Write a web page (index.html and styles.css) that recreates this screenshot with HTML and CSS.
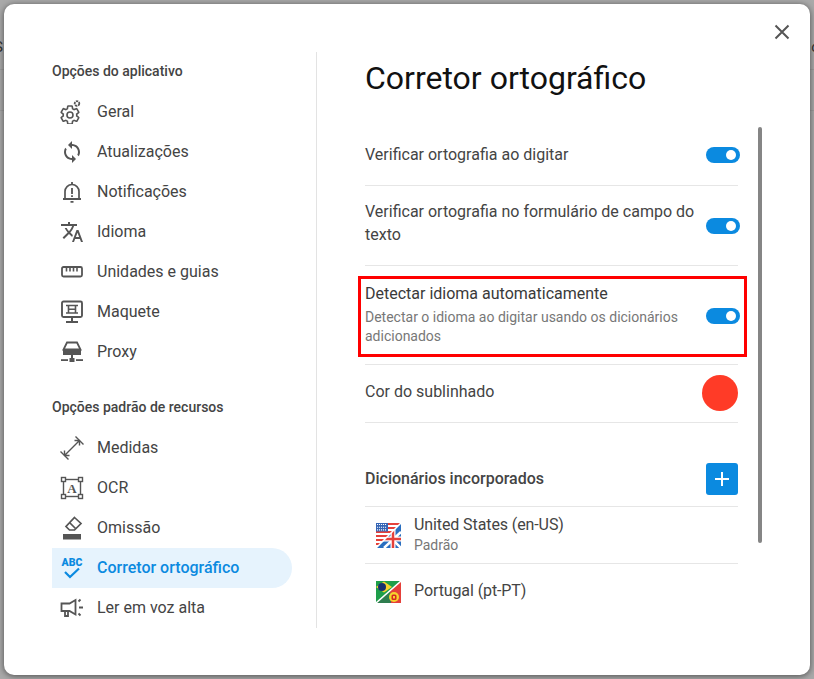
FILE: index.html
```html
<!DOCTYPE html>
<html lang="pt">
<head>
  <meta charset="UTF-8">
  <title>Corretor ortográfico</title>
  <link rel="stylesheet" href="styles.css">
</head>
<body>
  <span class="peek peek-left">S</span>
  <span class="peek peek-right">c</span>

  <div class="dialog">
    <button class="close" aria-label="Fechar">
      <svg width="16" height="16" viewBox="0 0 16 16"><path d="M1.5 1.500l13 13M14.500 1.500l-13 13" stroke="#555" stroke-width="2" fill="none"/></svg>
    </button>

    <nav class="side">
      <h3 class="side-head">Opções do aplicativo</h3>
      <a class="item">
        <svg class="icon" viewBox="0 0 24 24" fill="none" stroke="#555" stroke-width="1.700">
          <g transform="translate(-1.300 3.700) scale(.94)"><path d="M19.14,12.94c0.04-0.3,0.06-0.61,0.06-0.94c0-0.32-0.02-0.64-0.07-0.94l2.03-1.58c0.18-0.14,0.23-0.41,0.12-0.61l-1.92-3.32c-0.12-0.22-0.37-0.29-0.59-0.22l-2.39,0.96c-0.5-0.38-1.03-0.7-1.62-0.94L14.4,2.81c-0.04-0.24-0.24-0.41-0.48-0.41h-3.84c-0.24,0-0.43,0.17-0.47,0.41L9.25,5.35C8.66,5.59,8.12,5.92,7.63,6.29L5.24,5.33c-0.22-0.08-0.47,0-0.59,0.22L2.74,8.87C2.62,9.08,2.66,9.34,2.86,9.48l2.03,1.58C4.84,11.36,4.8,11.69,4.8,12s0.02,0.64,0.07,0.94l-2.03,1.58c-0.18,0.14-0.23,0.41-0.12,0.61l1.92,3.32c0.12,0.22,0.37,0.29,0.59,0.22l2.39-0.96c0.5,0.38,1.03,0.7,1.62,0.94l0.36,2.54c0.05,0.24,0.24,0.41,0.48,0.41h3.84c0.24,0,0.44-0.17,0.47-0.41l0.36-2.54c0.59-0.24,1.13-0.56,1.62-0.94l2.39,0.96c0.22,0.08,0.47,0,0.59-0.22l1.92-3.32c0.12-0.22,0.07-0.47-0.12-0.61L19.14,12.94z"/><circle cx="12" cy="12" r="3.200"/></g>
          <circle cx="17" cy="3.500" r="2.300" stroke-width="1.800" stroke-dasharray="2.200 .7"/>
        </svg>
        Geral
      </a>
      <a class="item">
        <svg class="icon" viewBox="0 0 24 24" fill="#555"><path d="M12 4V1L8 5l4 4V6c3.310 0 6 2.690 6 6 0 1.010-.25 1.970-.7 2.800l1.460 1.460C19.540 15.030 20 13.570 20 12c0-4.420-3.580-8-8-8zm0 14c-3.310 0-6-2.690-6-6 0-1.010.25-1.970.7-2.800L5.240 7.740C4.460 8.970 4 10.430 4 12c0 4.420 3.580 8 8 8v3l4-4-4-4v3z"/></svg>
        Atualizações
      </a>
      <a class="item">
        <svg class="icon" viewBox="0 0 24 24" fill="none" stroke="#555" stroke-width="1.700">
          <path d="M5 18.500v-7a7 7 0 0 1 14 0v7"/>
          <path d="M3 19h18" stroke-width="2"/>
          <path d="M12 2v2.500M12 8v6M12 15.200v1.800M10.500 21.800h3" stroke-width="1.800"/>
        </svg>
        Notificações
      </a>
      <a class="item">
        <svg class="icon" viewBox="0 0 24 24" fill="#555"><path d="M12.870 15.070l-2.540-2.510.03-.03c1.740-1.940 2.980-4.170 3.710-6.530H17V4h-7V2H8v2H1v1.990h11.170C11.500 7.920 10.440 9.750 9 11.350 8.070 10.320 7.300 9.190 6.690 8h-2c.73 1.630 1.730 3.170 2.980 4.560l-5.090 5.020L4 19l5-5 3.110 3.110.76-2.040zM18.500 10h-2L12 22h2l1.120-3h4.750L21 22h2l-4.500-12zm-2.620 7l1.620-4.330L19.120 17h-3.240z"/></svg>
        Idioma
      </a>
      <a class="item">
        <svg class="icon" viewBox="0 0 24 24" fill="none" stroke="#555" stroke-width="1.800">
          <rect x="2" y="7" width="20" height="9.500" rx="1.500"/>
          <path d="M6.500 7.500v4M10 7.500v4M13.500 7.500v4M17 7.500v4" stroke-width="1.600"/>
        </svg>
        Unidades e guias
      </a>
      <a class="item">
        <svg class="icon" viewBox="0 0 24 24" fill="none" stroke="#555" stroke-width="1.900">
          <rect x="2" y="1.500" width="20" height="15.500" rx="1.500"/>
          <path d="M6 5.500h12M6 13h12M8.500 5.500v7.500M15.500 5.500v7.500M8.500 9.300h7" stroke-width="1.600"/>
          <path d="M12 17v4.500M6 22h12" stroke-width="2"/>
        </svg>
        Maquete
      </a>
      <a class="item">
        <svg class="icon" viewBox="0 0 24 24" fill="#555">
          <path d="M7 2.500h10l3.500 7h-17z" fill="none" stroke="#555" stroke-width="1.800"/>
          <rect x="3" y="9" width="18" height="6"/>
          <rect x="11" y="15" width="2" height="3"/>
          <rect x="9.500" y="18" width="5" height="4"/>
          <rect x="1" y="19.200" width="7" height="1.800"/>
          <rect x="16" y="19.200" width="7" height="1.800"/>
        </svg>
        Proxy
      </a>

      <h3 class="side-head side-head-next">Opções padrão de recursos</h3>
      <a class="item">
        <svg class="icon" viewBox="0 0 24 24" fill="none" stroke="#555" stroke-width="1.400">
          <path d="M4.500 19.500L19.500 4.500M19.500 4.500h-5M19.500 4.500v5M4.500 19.500h5M4.500 19.500v-5"/>
          <path d="M0.500 15.500l8 8M15.500 0.500l8 8"/>
        </svg>
        Medidas
      </a>
      <a class="item">
        <svg class="icon" viewBox="0 0 24 24" fill="none" stroke="#555" stroke-width="1.400">
          <rect x="3.500" y="3.500" width="17" height="17"/>
          <g fill="#fff"><rect x="1.500" y="1.500" width="4" height="4"/><rect x="18.500" y="1.500" width="4" height="4"/><rect x="1.500" y="18.500" width="4" height="4"/><rect x="18.500" y="18.500" width="4" height="4"/></g>
          <text class="ocr-a" x="12" y="17" text-anchor="middle">A</text>
        </svg>
        OCR
      </a>
      <a class="item">
        <svg class="icon" viewBox="0 0 24 24" fill="none" stroke="#555" stroke-width="1.700">
          <path d="M14.500 1.500l6.500 6-6.500 6.500h-5l-3.500-3.500z"/>
          <path d="M9.500 6.500l6 6" />
          <rect x="3" y="18" width="18" height="5.500" fill="#555" stroke="none"/>
        </svg>
        Omissão
      </a>
      <a class="item active">
        <svg class="icon" viewBox="0 0 24 24" fill="none" stroke="#0b8ae0" stroke-width="2.200">
          <text class="abc" x="12" y="9.500" text-anchor="middle">ABC</text>
          <path d="M5 16l5 5 9-8.500"/>
        </svg>
        Corretor ortográfico
      </a>
      <a class="item">
        <svg class="icon" viewBox="0 0 24 24" fill="none" stroke="#555" stroke-width="1.800">
          <path d="M1.500 7.500h8l6-3.500v14.500l-6-3.500h-8z"/>
          <path d="M5 15v5h3v-5"/>
          <path d="M18.500 5.500l2-2M19 11.500h4M18.500 17.500l2 2"/>
        </svg>
        Ler em voz alta
      </a>
    </nav>

    <main class="content">
      <h1 class="title">Corretor ortográfico</h1>

      <div class="row row-first">
        <span class="label">Verificar ortografia ao digitar</span>
        <span class="toggle"></span>
      </div>
      <div class="row row-two">
        <span class="label label-wrap">Verificar ortografia no formulário de campo do texto</span>
        <span class="toggle"></span>
      </div>
      <div class="row row-desc">
        <div class="label-wrap">
          <div class="label">Detectar idioma automaticamente</div>
          <div class="desc">Detectar o idioma ao digitar usando os dicionários adicionados</div>
        </div>
        <span class="toggle"></span>
      </div>
      <div class="row row-color">
        <span class="label">Cor do sublinhado</span>
        <span class="swatch"></span>
      </div>

      <div class="row row-dict-head">
        <span class="dict-title">Dicionários incorporados</span>
        <button class="add" aria-label="Adicionar">
          <svg width="14" height="14" viewBox="0 0 14 14"><path d="M7 0v14M0 7h14" stroke="#fff" stroke-width="2"/></svg>
        </button>
      </div>

      <div class="row dict">
        <svg class="flag" width="25" height="25" viewBox="0 0 25 25">
          <defs>
            <clipPath id="us-half"><path d="M0 0h25L0 25z"/></clipPath>
            <clipPath id="uk-half"><path d="M25 0v25H0z"/></clipPath>
          </defs>
          <g clip-path="url(#us-half)">
            <rect width="25" height="25" fill="#fff"/>
            <path d="M0 0h25v2H0zM0 4h25v2H0zM0 8h25v2H0zM0 12h25v2H0zM0 16h25v2H0zM0 20h25v2H0z" fill="#e5403a"/>
            <rect width="12" height="8.500" fill="#3565b5"/>
            <path d="M1 1.500h10M1 4.200h10M1 6.900h10" stroke="#fff" stroke-width="1.100" stroke-dasharray="1.100 .9"/>
          </g>
          <g clip-path="url(#uk-half)">
            <rect width="25" height="25" fill="#2a6fc0"/>
            <path d="M8 25L25 9M14 14L25 25" stroke="#fff" stroke-width="2.500"/>
            <path d="M17 0v25M0 16h25" stroke="#fff" stroke-width="5"/>
            <path d="M17 0v25M0 16h25" stroke="#e5403a" stroke-width="2.500"/>
          </g>
          <path d="M0 25L25 0" stroke="#fff" stroke-width="1.500"/>
        </svg>
        <div class="dict-text">
          <div class="label label-dict">United States (en-US)</div>
          <div class="default">Padrão</div>
        </div>
      </div>
      <div class="row dict dict-last">
        <svg class="flag" width="25" height="22" viewBox="0 0 25 22">
          <defs>
            <clipPath id="br-half"><path d="M0 0h25L0 22z"/></clipPath>
            <clipPath id="pt-half"><path d="M25 0v22H0z"/></clipPath>
          </defs>
          <g clip-path="url(#br-half)">
            <rect width="25" height="22" fill="#1e9e4a"/>
            <path d="M0 6L8 0.500 16 6 8 11.500z" fill="#f6d32d"/>
            <circle cx="6" cy="6" r="4" fill="#16306e"/>
          </g>
          <g clip-path="url(#pt-half)">
            <rect width="25" height="22" fill="#e5403a"/>
            <path d="M0 22L14 9l1 13z" fill="#2f7d4f"/>
            <circle cx="18" cy="16" r="5" fill="#f6d32d"/>
            <rect x="15.500" y="13.500" width="5" height="5.500" rx="1.500" fill="#d6281f"/>
            <rect x="17" y="15" width="2" height="2.500" fill="#f6d32d"/>
          </g>
          <path d="M0 22L25 0" stroke="#fff" stroke-width="1.500"/>
        </svg>
        <span class="label label-dict">Portugal (pt-PT)</span>
      </div>
    </main>

    <div class="scrollbar"></div>
    <div class="highlight"></div>
  </div>
</body>
</html>
```

FILE: styles.css
```css
* {
  box-sizing: border-box;
}

html, body {
  height: 100%;
}

body {
  margin: 0;
  padding: 4px;
  overflow: hidden;
  font-family: Roboto, "Liberation Sans", sans-serif;
  color: #333;
  background:
    linear-gradient(#9d9d9d, #9d9d9d) 0 69px / 100% 1px no-repeat,
    linear-gradient(#9d9d9d, #9d9d9d) 0 110px / 100% 1px no-repeat,
    #a9a9a9;
}

.peek {
  position: absolute;
  top: 38px;
  font-size: 15px;
  color: #333;
}

.peek-left {
  left: -6px;
}

.peek-right {
  right: -5px;
}

.dialog {
  position: relative;
  display: flex;
  width: 806px;
  height: 671px;
  padding: 48px 0 47px 48px;
  background: #fff;
  border-radius: 10px;
  box-shadow: 0 1px 6px rgba(0, 0, 0, .55);
}

.close {
  position: absolute;
  top: 20px;
  right: 20px;
  display: flex;
  padding: 0;
  background: none;
  border: 0;
}

/* left column */
.side {
  width: 265px;
  padding-right: 24px;
  border-right: 1px solid #e3e3e3;
}

.side-head {
  height: 38px;
  margin: 0 0 2px;
  font-size: 14px;
  font-weight: 500;
  line-height: 38px;
  color: #444;
}

.side-head-next {
  margin-top: 16px;
}

.item {
  display: flex;
  align-items: center;
  gap: 13px;
  height: 40px;
  padding: 0 0 2px 8px;
  font-size: 16px;
  color: #444;
}

.item.active {
  font-weight: 500;
  color: #0b8ae0;
  background: #e6f3fd;
  border-radius: 0 20px 20px 0;
}

.icon {
  flex: none;
  width: 24px;
  height: 24px;
  margin-top: 2px;
}

.ocr-a {
  font-family: "Liberation Serif", serif;
  font-size: 13px;
  font-weight: 700;
  fill: #555;
  stroke: none;
}

.abc {
  font-family: Roboto, sans-serif;
  font-size: 10.5px;
  font-weight: 900;
  fill: #0b8ae0;
  stroke: none;
}

/* right column */
.content {
  width: 441px;
  padding-left: 48px;
  overflow: hidden;
}

.title {
  height: 73px;
  margin: 0;
  font-size: 32px;
  font-weight: 400;
  line-height: 52px;
  color: #111;
}

.row {
  display: flex;
  align-items: center;
  justify-content: space-between;
  width: 373px;
  border-bottom: 1px solid #e6e6e6;
}

.row-first {
  height: 61px;
}

.row-first .label {
  margin-bottom: 1px;
}

.row-two {
  height: 80px;
}

.row-two .label-wrap {
  margin-bottom: 5px;
}

.row-desc {
  height: 99px;
}

.row-desc .label-wrap {
  margin-bottom: 3px;
}

.row-desc .toggle,
.row-two .toggle {
  margin-top: 1px;
}

.row-color {
  height: 58px;
}

.row-color .label {
  margin-bottom: 5px;
}

.row-color .swatch {
  margin-bottom: 2px;
}

.row-dict-head {
  height: 84px;
  padding-top: 28px;
}

.label {
  font-size: 16px;
  line-height: 23px;
  color: #444;
}

.label-wrap {
  width: 332px;
}

.label-dict {
  letter-spacing: -.1px;
}

.dict-text {
  margin-bottom: 3px;
}

.dict-last .label {
  margin-bottom: 2px;
}

.row-desc .label {
  color: #3a3a3a;
}

.desc {
  margin-top: 3px;
  font-size: 14px;
  line-height: 18.5px;
  color: #777;
}

.toggle {
  position: relative;
  flex: none;
  width: 34px;
  height: 16px;
  margin-right: -2px;
  background: #0b8ae0;
  border-radius: 8px;
}

.toggle::after {
  content: "";
  position: absolute;
  top: 3px;
  right: 4px;
  width: 10px;
  height: 10px;
  background: #fff;
  border-radius: 50%;
}

.swatch {
  width: 36px;
  height: 36px;
  background: #ff3b27;
  border-radius: 50%;
}

.dict-title {
  margin-bottom: 1px;
  font-size: 16px;
  font-weight: 500;
  color: #444;
}

.add {
  display: flex;
  align-items: center;
  justify-content: center;
  width: 32px;
  height: 32px;
  padding: 0;
  background: #0b8ae0;
  border: 0;
  border-radius: 3px;
}

.dict {
  justify-content: flex-start;
  gap: 13px;
  height: 57px;
  padding-left: 11px;
}

.dict-last {
  height: 55px;
  border-bottom: 0;
}

.flag {
  flex: none;
}

.default {
  font-size: 14px;
  line-height: 19px;
  color: #777;
}

.scrollbar {
  position: absolute;
  top: 123px;
  left: 754px;
  width: 4px;
  height: 416px;
  background: #858585;
  border-radius: 2px;
}

.highlight {
  position: absolute;
  top: 272px;
  left: 354px;
  width: 389px;
  height: 81px;
  border: 3px solid #ff0000;
}
```
